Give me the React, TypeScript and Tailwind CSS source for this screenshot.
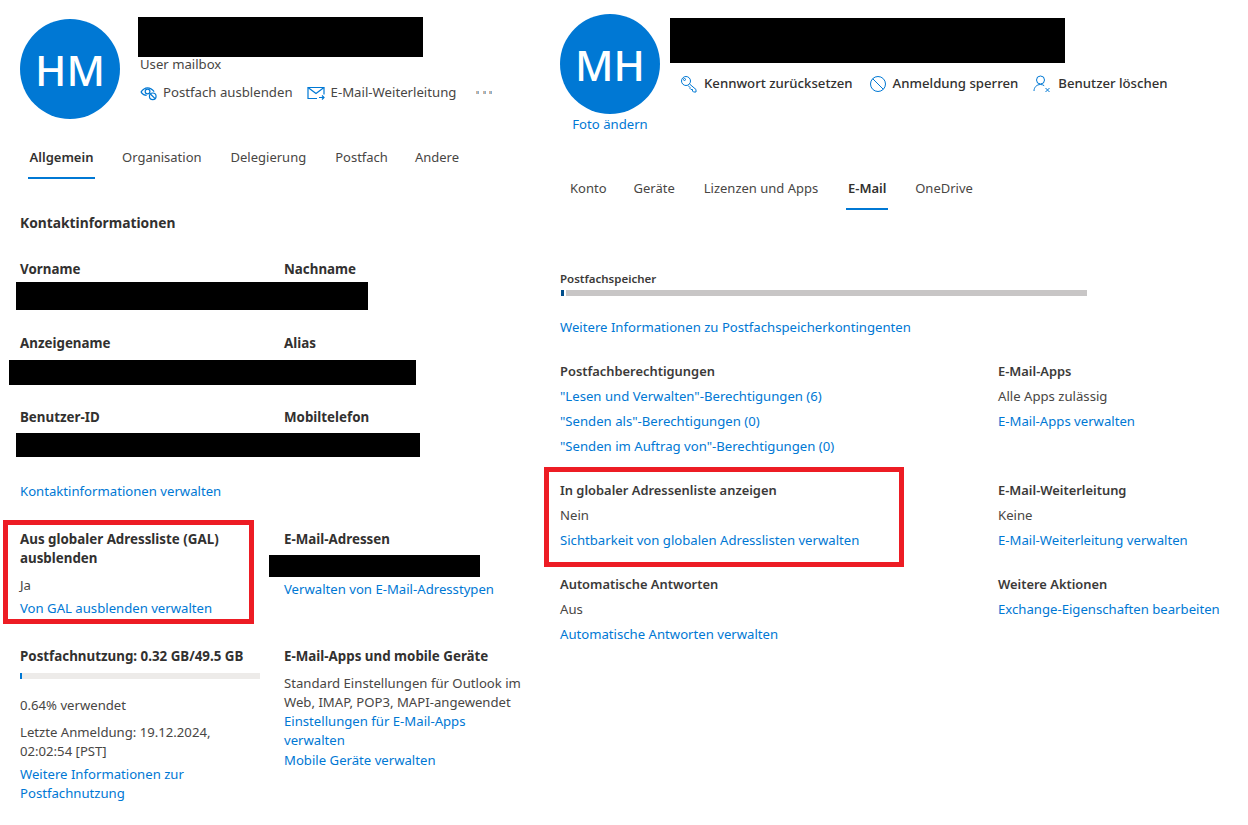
const font = { fontFamily: '"Noto Sans", sans-serif' };

type P = { children: React.ReactNode; className?: string };

function L({ children, className = "" }: P) {
  return <div className={"text-[#0078d4] " + className}>{children}</div>;
}
function H({ children, className = "" }: P) {
  return <div className={"font-bold text-[13.350px] text-[#323130] " + className}>{children}</div>;
}
function S({ children, className = "" }: P) {
  return <div className={"font-semibold text-[12.900px] text-[#3b3a39] " + className}>{children}</div>;
}
function T({ children, className = "" }: P) {
  return <div className={"text-[#484644] " + className}>{children}</div>;
}

function EyeIcon() {
  return (
    <svg width="17" height="16" viewBox="0 0 18 16" fill="none" stroke="#0078d4" strokeWidth="1.3">
      <path d="M1 7c2-3 4-4.500 7-4.500S13 4 15 6.500" />
      <path d="M1 7c1.500 2 3.500 3.500 6 3.500" />
      <circle cx="8" cy="6.500" r="2.500" />
      <circle cx="13.500" cy="11.500" r="3.500" />
      <path d="M11 9l5 5" />
    </svg>
  );
}
function MailIcon() {
  return (
    <svg width="18" height="14" viewBox="0 0 18 14" fill="none" stroke="#0078d4" strokeWidth="1.2">
      <path d="M10 12.500H1V1.500h16v7" />
      <path d="M1 1.500l8 6 8-6" />
      <path d="M12 11.500h5M15 9.500l2 2-2 2" />
    </svg>
  );
}
function KeyIcon() {
  return (
    <svg width="18" height="18" viewBox="0 0 18 18" fill="none" stroke="#0078d4" strokeWidth="1">
      <circle cx="6" cy="6" r="4.500" />
      <circle cx="4.500" cy="4.500" r="1" />
      <path d="M9.500 9l6.500 5.500v2.500h-2.500l-1-1v-1.500h-1.500l-1-1v-1l-2-2" />
    </svg>
  );
}
function BlockIcon() {
  return (
    <svg width="18" height="18" viewBox="0 0 18 18" fill="none" stroke="#0078d4" strokeWidth="1">
      <circle cx="9" cy="9" r="7.500" />
      <path d="M3.700 3.700l10.600 10.600" />
    </svg>
  );
}
function UserXIcon() {
  return (
    <svg width="18" height="18" viewBox="0 0 18 18" fill="none" stroke="#0078d4" strokeWidth="1">
      <circle cx="7.500" cy="5" r="4" />
      <path d="M1 16c0-3.500 2.500-6.500 6.500-6.500 1.500 0 2.700.4 3.700 1.200" />
      <path d="M12.500 13l4 4M16.500 13l-4 4" />
    </svg>
  );
}

function Action({ icon, label, className = "" }: { icon: React.ReactNode; label: string; className?: string }) {
  return (
    <div className={"flex items-center " + className}>
      {icon}
      <span>{label}</span>
    </div>
  );
}

function Redact({ className }: { className: string }) {
  return <div className={"bg-black " + className} />;
}

function Dot() {
  return <i className="w-[3px] h-[3px] bg-linear-to-r from-[#f0b27a] to-[#6cb0e8]" />;
}

export default function App() {
  return (
    <div style={font} className="flex w-[1248px] h-[825px] bg-white text-[13.150px] leading-[19px] overflow-hidden">
      {/* Left panel */}
      <div className="w-[560px] shrink-0 pl-5">
        <div className="flex pt-[17px] h-[140px]">
          <div className="w-[100px] h-[100px] mt-[2px] rounded-full bg-[#0078d4] text-white text-[42px] font-medium flex items-center justify-center">HM</div>
          <div className="ml-[18px] flex flex-col">
            <Redact className="w-[285px] h-[40px]" />
            <T className="ml-[2px] mt-[-2px]">User mailbox</T>
            <div className="flex items-center ml-[2px] mt-[9px] text-[13.200px] text-[#484644]">
              <Action icon={<EyeIcon />} label="Postfach ausblenden" className="gap-[6px]" />
              <Action icon={<MailIcon />} label="E-Mail-Weiterleitung" className="ml-[14px] gap-[6px]" />
              <span className="ml-[20px] flex gap-[3.400px]">
                <Dot />
                <Dot />
                <Dot />
              </span>
            </div>
          </div>
        </div>

        <div className="flex text-[13px] text-[#484644] h-[42px] ml-[8px]">
          <div className="flex flex-col items-center w-[67px] h-[40px]">
            <div className="pt-[8px] font-semibold text-[#323130]">Allgemein</div>
            <div className="mt-[10px] w-full h-[2px] bg-[#0078d4]" />
          </div>
          <div className="pt-[8px] ml-[27px]">Organisation</div>
          <div className="pt-[8px] ml-[29px]">Delegierung</div>
          <div className="pt-[8px] ml-[29px]">Postfach</div>
          <div className="pt-[8px] ml-[27px]">Andere</div>
        </div>

        <H className="mt-[31px] text-[13.800px]">Kontaktinformationen</H>

        <div className="grid grid-cols-[264px_1fr] mt-[28px]">
          <H>Vorname</H>
          <H>Nachname</H>
        </div>
        <Redact className="-ml-[4px] mt-[3px] w-[352px] h-[28px]" />
        <div className="grid grid-cols-[264px_1fr] mt-[24px]">
          <H>Anzeigename</H>
          <H>Alias</H>
        </div>
        <Redact className="-ml-[11px] mt-[7px] w-[407px] h-[25px]" />
        <div className="grid grid-cols-[264px_1fr] mt-[23px]">
          <H>Benutzer-ID</H>
          <H>Mobiltelefon</H>
        </div>
        <Redact className="-ml-[4px] mt-[6px] w-[404px] h-[24px]" />
        <L className="mt-[25px]">Kontaktinformationen verwalten</L>

        <div className="grid grid-cols-[264px_1fr] mt-[19px]">
          <div className="-ml-[17px] w-[251px] h-[104px] border-[5px] border-[#ed1c24] pl-[12px] pt-[5px]">
            <H>Aus globaler Adressliste (GAL) ausblenden</H>
            <T className="mt-[8px]">Ja</T>
            <L className="mt-[4px]">Von GAL ausblenden verwalten</L>
          </div>
          <div className="pt-[10px]">
            <H>E-Mail-Adressen</H>
            <Redact className="-ml-[15px] mt-[6px] w-[211px] h-[22px]" />
            <L className="mt-[3px]">Verwalten von E-Mail-Adresstypen</L>
          </div>
        </div>

        <div className="grid grid-cols-[264px_1fr] mt-[23px]">
          <div className="w-[240px]">
            <H>Postfachnutzung: 0.32 GB/49.5 GB</H>
            <div className="mt-[7px] h-[6px] bg-[#edebe9]">
              <div className="w-[2px] h-full bg-[#0078d4]" />
            </div>
            <T className="mt-[17px]">0.64% verwendet</T>
            <T className="mt-[8px]">Letzte Anmeldung: 19.12.2024, 02:02:54 [PST]</T>
            <L className="mt-[4px]">Weitere Informationen zur Postfachnutzung</L>
          </div>
          <div className="w-[240px]">
            <H>E-Mail-Apps und mobile Geräte</H>
            <T className="mt-[8px]">Standard Einstellungen für Outlook im Web, IMAP, POP3, MAPI-angewendet</T>
            <L>Einstellungen für E-Mail-Apps verwalten</L>
            <L className="mt-[1px]">Mobile Geräte verwalten</L>
          </div>
        </div>
      </div>

      {/* Right panel */}
      <div className="flex-1 min-w-0">
        <div className="flex pt-[14px] h-[163px]">
          <div className="w-[100px] flex flex-col items-center">
            <div className="w-[100px] h-[100px] rounded-full bg-[#0078d4] text-white text-[42px] font-medium flex items-center justify-center">MH</div>
            <L className="mt-[1px]">Foto ändern</L>
          </div>
          <div className="ml-[10px] flex flex-col">
            <Redact className="w-[395px] h-[45px] mt-[4px]" />
            <div className="flex items-center mt-[11px] ml-[10px] font-medium text-[13.200px] text-[#323130]">
              <Action icon={<KeyIcon />} label="Kennwort zurücksetzen" className="gap-[6px]" />
              <Action icon={<BlockIcon />} label="Anmeldung sperren" className="ml-[16px] gap-[6px]" />
              <Action icon={<UserXIcon />} label="Benutzer löschen" className="ml-[15px] gap-[7px]" />
            </div>
          </div>
        </div>

        <div className="flex text-[13px] text-[#484644] h-[47px] ml-[10px]">
          <div className="pt-[16px]">Konto</div>
          <div className="pt-[16px] ml-[27px]">Geräte</div>
          <div className="pt-[16px] ml-[29px]">Lizenzen und Apps</div>
          <div className="flex flex-col items-center ml-[28px] w-[42px]">
            <div className="pt-[16px] font-semibold text-[#323130]">E-Mail</div>
            <div className="mt-[10px] w-full h-[2px] bg-[#0078d4]" />
          </div>
          <div className="pt-[16px] ml-[27px]">OneDrive</div>
        </div>

        <div className="mt-[61px] text-[11.500px] leading-[16px] font-semibold text-[#3b3a39]">Postfachspeicher</div>
        <div className="flex ml-[1px] mt-[3px] h-[6px] w-[526px]">
          <div className="w-[3px] bg-[#004e8c]" />
          <div className="ml-[2px] flex-1 bg-[#c8c6c6]" />
        </div>
        <L className="mt-[22px]">Weitere Informationen zu Postfachspeicherkontingenten</L>

        <div className="grid grid-cols-[438px_1fr] mt-[25px]">
          <div>
            <S>Postfachberechtigungen</S>
            <L className="mt-[6px]">"Lesen und Verwalten"-Berechtigungen (6)</L>
            <L className="mt-[6px]">"Senden als"-Berechtigungen (0)</L>
            <L className="mt-[6px]">"Senden im Auftrag von"-Berechtigungen (0)</L>
          </div>
          <div>
            <S>E-Mail-Apps</S>
            <T className="mt-[6px]">Alle Apps zulässig</T>
            <L className="mt-[6px]">E-Mail-Apps verwalten</L>
          </div>
        </div>

        <div className="grid grid-cols-[438px_1fr] mt-[11px]">
          <div className="-ml-[16px] w-[360px] h-[100px] border-[5px] border-[#ed1c24] pl-[11px] pt-[9px]">
            <S>In globaler Adressenliste anzeigen</S>
            <T className="mt-[6px]">Nein</T>
            <L className="mt-[6px]">Sichtbarkeit von globalen Adresslisten verwalten</L>
          </div>
          <div className="pt-[14px]">
            <S>E-Mail-Weiterleitung</S>
            <T className="mt-[6px]">Keine</T>
            <L className="mt-[6px]">E-Mail-Weiterleitung verwalten</L>
          </div>
        </div>

        <div className="grid grid-cols-[438px_1fr] mt-[8px]">
          <div>
            <S>Automatische Antworten</S>
            <T className="mt-[6px]">Aus</T>
            <L className="mt-[6px]">Automatische Antworten verwalten</L>
          </div>
          <div>
            <S>Weitere Aktionen</S>
            <L className="mt-[6px]">Exchange-Eigenschaften bearbeiten</L>
          </div>
        </div>
      </div>
    </div>
  );
}
